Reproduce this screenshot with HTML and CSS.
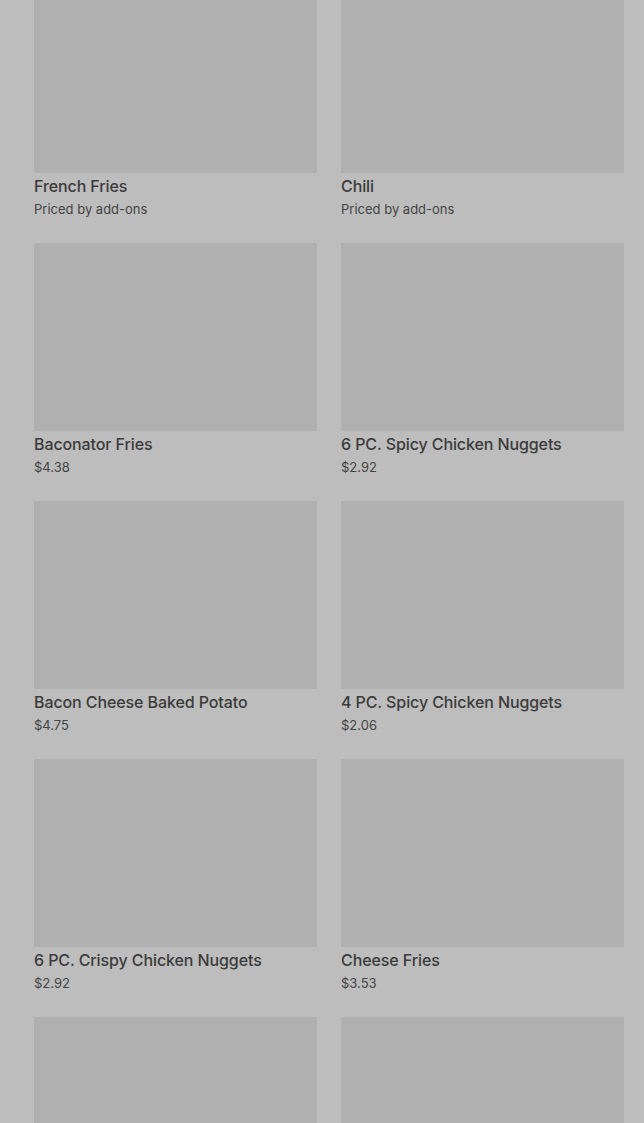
FILE: index.html
```html
<!doctype html>
<html>
<head>
<meta charset="UTF-8">
<title>Menu</title>
<link rel="stylesheet" href="styles.css">
</head>
<body>
	<ul class="menu-grid">
		<li class="item"><div class="pic"></div><h3>French Fries</h3><p>Priced by add-ons</p></li>
		<li class="item"><div class="pic"></div><h3>Chili</h3><p>Priced by add-ons</p></li>
		<li class="item"><div class="pic"></div><h3>Baconator Fries</h3><p>$4.38</p></li>
		<li class="item"><div class="pic"></div><h3>6 PC. Spicy Chicken Nuggets</h3><p>$2.92</p></li>
		<li class="item"><div class="pic"></div><h3>Bacon Cheese Baked Potato</h3><p>$4.75</p></li>
		<li class="item"><div class="pic"></div><h3>4 PC. Spicy Chicken Nuggets</h3><p>$2.06</p></li>
		<li class="item"><div class="pic"></div><h3>6 PC. Crispy Chicken Nuggets</h3><p>$2.92</p></li>
		<li class="item"><div class="pic"></div><h3>Cheese Fries</h3><p>$3.53</p></li>
		<li class="item"><div class="pic"></div></li>
		<li class="item"><div class="pic"></div></li>
	</ul>
</body>
</html>
```

FILE: styles.css
```css
*{margin:0;padding:0;}
html,body{height:100%;overflow:hidden;}
body{background:#bdbdbd;font-family:"Inter","Roboto",sans-serif;color:#3e3e3e;}
ul,li{list-style:none;}
/*menu grid*/
.menu-grid{display:grid;grid-template-columns:283px 283px;column-gap:24px;row-gap:24px;padding:0 20px 0 34px;margin-top:-15px;}
.item .pic{height:188px;background:#b0b0b0;}
.item h3{font-size:16px;font-weight:500;line-height:20px;margin-top:3px;color:#3b3b3b;letter-spacing:-0.1px;}
.item p{font-size:13px;line-height:20px;margin-top:3px;color:#444;}
```
